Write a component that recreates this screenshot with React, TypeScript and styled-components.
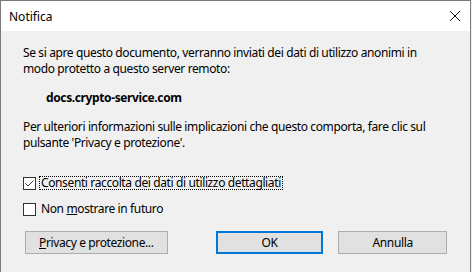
import React from "react";
import styled, { createGlobalStyle } from "styled-components";

const GlobalStyle = createGlobalStyle`
  html, body {
    margin: 0;
    padding: 0;
    background: #f0f0f0;
  }
  body {
    font-family: "Noto Sans", "Open Sans", sans-serif;
    font-size: 12px;
    color: #000;
  }
`;

// Dialog frame
const Window = styled.div`
  width: 469px;
  height: 272px;
  border: 1px solid #7a7a7a;
  border-bottom: none;
  background: #f0f0f0;
  display: flex;
  flex-direction: column;
`;

const TitleBar = styled.div`
  height: 30px;
  background: #fff;
  display: flex;
  align-items: center;
  justify-content: space-between;
  padding: 0 9px 0 8px;
`;

const Title = styled.span`
  font-size: 12px;
  color: #000;
`;

const CloseButton = styled.span`
  display: flex;
  width: 12px;
  height: 12px;
`;

const Body = styled.div`
  padding: 14px 23px 0 22px;
  display: flex;
  flex-direction: column;
`;

const Text = styled.p<{ $top?: number }>`
  margin: ${(p) => p.$top ?? 0}px 0 0;
  line-height: 16px;
  font-size: 12px;
  letter-spacing: -0.38px;
`;

const Host = styled.p`
  margin: 13px 0 0 23px;
  line-height: 16px;
  font-weight: bold;
  letter-spacing: -0.38px;
`;

const CheckRow = styled.label<{ $top: number }>`
  display: flex;
  align-items: center;
  gap: 3px;
  margin-top: ${(p) => p.$top}px;
  height: 14px;
`;

const Box = styled.span`
  width: 11px;
  height: 11px;
  border: 1px solid #333;
  background: #fff;
  display: flex;
  align-items: center;
  justify-content: center;
`;

const Label = styled.span<{ $focused?: boolean }>`
  line-height: 12px;
  padding: 0 1px;
  border: 1px dotted ${(p) => (p.$focused ? "#000" : "transparent")};
  letter-spacing: -0.38px;
`;

const Underline = styled.span`
  text-decoration: underline;
`;

const Buttons = styled.div`
  display: flex;
  margin-top: 15px;
  margin-left: 2px;
`;

const Button = styled.button<{ $w: number; $default?: boolean; $gap?: number }>`
  width: ${(p) => p.$w}px;
  height: 23px;
  margin-left: ${(p) => p.$gap ?? 0}px;
  background: #e1e1e1;
  border: ${(p) => (p.$default ? "2px solid #0078d7" : "1px solid #adadad")};
  font-family: "Noto Sans", "Open Sans", sans-serif;
  font-size: 12px;
  letter-spacing: -0.38px;
  color: #000;
  padding: 0;
`;

const Check = () => (
  <svg width="11" height="11" viewBox="0 0 11 11">
    <path d="M1.5 5.5 L4 8 L9.5 2.5" stroke="#333" strokeWidth="1" fill="none" />
  </svg>
);

export default function App() {
  return (
    <>
      <GlobalStyle />
      <Window>
        <TitleBar>
          <Title>Notifica</Title>
          <CloseButton>
            <svg width="12" height="12" viewBox="0 0 12 12">
              <path d="M1 1 L11 11 M11 1 L1 11" stroke="#111" strokeWidth="1" />
            </svg>
          </CloseButton>
        </TitleBar>
        <Body>
          <Text>
            Se si apre questo documento, verranno inviati dei dati di utilizzo anonimi in
            <br />
            modo protetto a questo server remoto:
          </Text>
          <Host>docs.crypto-service.com</Host>
          <Text $top={13}>
            Per ulteriori informazioni sulle implicazioni che questo comporta, fare clic sul
            <br />
            pulsante 'Privacy e protezione'.
          </Text>
          <CheckRow $top={25}>
            <Box>
              <Check />
            </Box>
            <Label $focused>Consenti raccolta dei dati di utilizzo dettagliati</Label>
          </CheckRow>
          <CheckRow $top={12}>
            <Box />
            <Label>
              Non <Underline>m</Underline>ostrare in futuro
            </Label>
          </CheckRow>
          <Buttons>
            <Button $w={143}>
              <Underline>P</Underline>rivacy e protezione...
            </Button>
            <Button $w={108} $gap={48} $default>
              OK
            </Button>
            <Button $w={109} $gap={15}>
              Annulla
            </Button>
          </Buttons>
        </Body>
      </Window>
    </>
  );
}
